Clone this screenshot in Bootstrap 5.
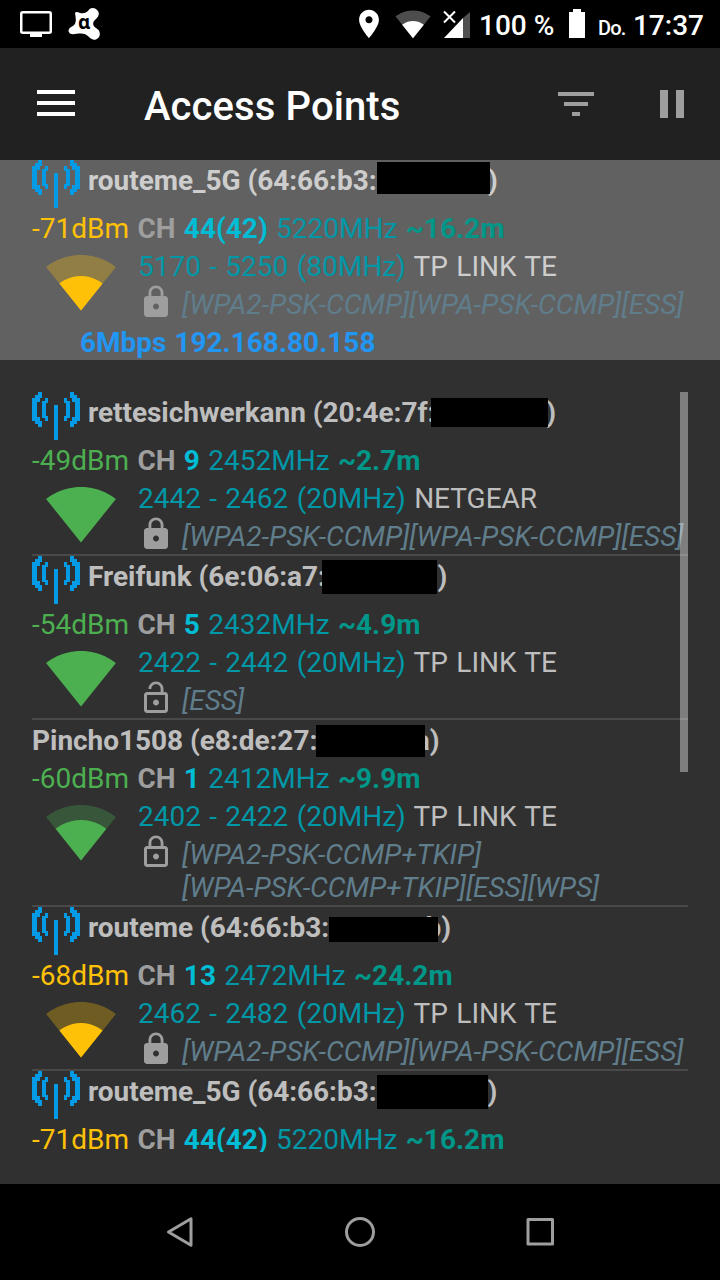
<!DOCTYPE html>
<html lang="de">
<head>
<meta charset="utf-8">
<meta name="viewport" content="width=device-width, initial-scale=1">
<title>Access Points</title>
<link rel="stylesheet" href="https://cdn.jsdelivr.net/npm/bootstrap@5.3.0/dist/css/bootstrap.min.css">
<style>
body{font-family:Roboto,sans-serif;font-size:28px;line-height:33px;background:#303030;color:rgba(255,255,255,.7);width:720px;height:1280px;overflow:hidden}
svg{display:block;flex:none}
.status{height:48px;background:#000;color:#fff;font-weight:500}
.appbar{height:112px;background:#212121;color:#fff}
.appbar h1{font-size:40px;font-weight:500;line-height:48px;margin:0;letter-spacing:.1px}
.muted{color:#9e9e9e}
.connected{background:#616161;height:200px}
.aplist{width:656px;height:760px;margin-top:32px;overflow:hidden;position:relative}
.scroll{position:absolute;top:0;right:0;width:8px;height:380px;background:rgba(255,255,255,.38)}
.ap+.ap{border-top:2px solid #494949}
.ln{padding:4px 0 1px;white-space:pre;word-spacing:1.4px}
.ttl{font-weight:700;letter-spacing:-.04px;word-spacing:0}
.ttl.ant{height:48px}
.ttl.ant .antenna{margin-right:8px}
.antenna{color:#039be5;margin-top:-4px}
.blk{background:#000;flex:none;position:relative;z-index:1}
.ch{color:#9e9e9e}.num{color:#00bcd4}.frq{color:#0097a7}.dst{color:#009688}
.good{color:#4caf50}.fair{color:#ffc107}
.sig{margin:0 21px 0 13px}
.caps{color:#607d8b;font-style:italic;padding:4px 0 0 8px;white-space:pre}
.caprow{min-height:38px}
.ip{color:#2196f3;padding-left:48px;word-spacing:1px}
.sysnav{height:96px;margin-top:32px;background:#000}
</style>
</head>
<body>
<svg width="0" height="0" class="position-absolute" aria-hidden="true">
<symbol id="ant" viewBox="0 0 48 48"><g id="half" fill="currentColor" shape-rendering="crispEdges"><path d="M6 0h4v6H8v4H5v15h3v4h2v6H6v-3H3v-3H0V6h3V3h3z"/><path d="M13 6h3v5h-2v13h2v5h-3v-3h-3V9h3z"/></g><use href="#half" transform="matrix(-1 0 0 1 48 0)"/><path fill="currentColor" d="M22 13h4v35h-4z"/></symbol>
<symbol id="w4" viewBox="0 0 24 24"><path fill="currentColor" d="M12.01 21.49L23.64 7c-.45-.34-4.93-4-11.64-4C5.28 3 .81 6.66.36 7l11.63 14.49.01.01z"/></symbol>
<symbol id="w3" viewBox="0 0 24 24"><use href="#w4" opacity=".3"/><path fill="currentColor" d="M3.53 10.95l8.46 10.54.01.01.01-.01 8.46-10.54C20.04 10.62 16.81 8 12 8c-4.81 0-8.04 2.62-8.47 2.95z"/></symbol>
<symbol id="w2" viewBox="0 0 24 24"><use href="#w4" opacity=".3"/><path fill="currentColor" d="M4.79 12.52l7.2 8.98H12l.01-.01 7.2-8.98C18.85 12.24 16.1 10 12 10s-6.85 2.24-7.21 2.52z"/></symbol>
<symbol id="lock" viewBox="0 0 24 24"><path fill="currentColor" d="M18 8h-1V6c0-2.76-2.24-5-5-5S7 3.24 7 6v2H6c-1.1 0-2 .9-2 2v10c0 1.1.9 2 2 2h12c1.1 0 2-.9 2-2V10c0-1.1-.9-2-2-2zm-6 9c-1.1 0-2-.9-2-2s.9-2 2-2 2 .9 2 2-.9 2-2 2zm3.1-9H8.9V6c0-1.71 1.39-3.1 3.1-3.1 1.71 0 3.1 1.39 3.1 3.1v2z"/></symbol>
<symbol id="locko" viewBox="0 0 24 24"><path fill="currentColor" d="M12 17c1.1 0 2-.9 2-2s-.9-2-2-2-2 .9-2 2 .9 2 2 2zm6-9h-1V6c0-2.76-2.24-5-5-5S7 3.24 7 6v2H6c-1.1 0-2 .9-2 2v10c0 1.1.9 2 2 2h12c1.1 0 2-.9 2-2V10c0-1.1-.9-2-2-2zM8.9 6c0-1.71 1.39-3.1 3.1-3.1s3.1 1.39 3.1 3.1v2H8.9V6zM18 20H6V10h12v10z"/></symbol>
<symbol id="open" viewBox="0 0 24 24"><path fill="currentColor" d="M12 17c1.1 0 2-.9 2-2s-.9-2-2-2-2 .9-2 2 .9 2 2 2zm6-9h-1V6c0-2.76-2.24-5-5-5S7 3.24 7 6h1.9c0-1.71 1.39-3.1 3.1-3.1 1.71 0 3.1 1.39 3.1 3.1v2H6c-1.1 0-2 .9-2 2v10c0 1.1.9 2 2 2h12c1.1 0 2-.9 2-2V10c0-1.1-.9-2-2-2zm0 12H6V10h12v10z"/></symbol>
</svg>

<header class="status d-flex align-items-start">
<svg width="32" height="48" style="margin-left:20px"><rect x="1.25" y="12.25" width="29.5" height="20.5" rx="1.5" fill="none" stroke="#fff" stroke-width="2.5"/><path fill="#fff" d="M10 33h12v4H10z"/></svg>
<svg width="34" height="48" style="margin-left:15px"><path fill="#fff" d="M8 13Q9 11 13 13 18 14 21 11C23 7 29 7 31.500 12 33 17 28 19 26.500 22 25 26 29 27.500 31.500 30 35 35 31 40 27 39.700 22 39 21 33.500 14 33.500 9 33.500 6 35 3 33.500 0 31 2 28 5 26.500 10 24 9 19 8 13z"/><text x="11" y="29" font-size="19" font-weight="700" fill="#000" font-family="'Noto Sans','DejaVu Sans',sans-serif">ɑ</text></svg>
<svg width="34" height="34" viewBox="0 0 24 24" style="margin:7px 0 0 251px"><path fill="#fff" d="M12 2C8.13 2 5 5.13 5 9c0 5.25 7 13 7 13s7-7.75 7-13c0-3.87-3.13-7-7-7zm0 9.5c-1.38 0-2.5-1.12-2.5-2.5s1.12-2.5 2.5-2.5 2.5 1.12 2.5 2.5-1.12 2.5-2.5 2.5z"/></svg>
<svg width="36" height="36" style="margin:5.5px 0 0 8.5px"><use href="#w2"/></svg>
<svg width="28" height="48" style="margin-left:12.5px"><path fill="#505050" d="M20 18l7-6v26h-7z"/><path fill="#fff" d="M20 18v20H1z"/><path stroke="#000" stroke-width="5" d="M1 11.500l11 11m0-11l-11 11"/><path stroke="#fff" stroke-width="2" d="M1 11.500l11 11m0-11l-11 11"/></svg>
<span style="margin:9px 0 0 8px">100 %</span>
<svg class="ms-auto" width="16" height="48"><path fill="#fff" d="M4 9h8v3h4v26H0V12h4z"/></svg>
<span style="margin:12px 0 0 12.500px;font-size:20px;letter-spacing:-.8px">Do.</span>
<span style="margin:9px 16px 0 7.500px">17:37</span>
</header>

<nav class="appbar d-flex align-items-center">
<svg width="38" height="26" style="margin-left:37px;margin-bottom:2px"><path fill="#fff" d="M0 0h38v4H0zm0 11h38v4H0zm0 11h38v4H0z"/></svg>
<h1 style="margin-left:69px;padding-top:5px">Access Points</h1>
<svg class="muted ms-auto" width="36" height="24"><path fill="currentColor" d="M0 0h36v4H0zm6 10h24v4H6zm8 10h8v4h-8z"/></svg>
<svg class="muted" width="24" height="28" style="margin:0 36px 0 66px"><path fill="currentColor" d="M0 0h8v28H0zm16 0h8v28h-8z"/></svg>
</nav>

<section class="connected"><div style="padding-left:32px">
<div class="ln ttl ant d-flex"><svg class="antenna" width="48" height="48"><use href="#ant"/></svg><span>routeme_5G (64:66:b3:</span><i class="blk" style="width:113px;height:32px;margin-top:-2px"></i><span style="margin-left:-1.5px">)</span></div>
<div class="ln"><span class="fair">-71dBm</span> <b class="ch">CH</b> <b class="num">44(42)</b> <span class="frq">5220MHz</span> <b class="dst">~16.2m</b></div>
<div class="d-flex"><svg class="fair sig" width="72" height="72"><use href="#w2"/></svg><div><div class="ln"><span class="frq">5170 - 5250 (80MHz)</span> TP LINK TE</div><div class="caprow d-flex"><svg class="muted" width="36" height="36"><use href="#lock"/></svg><div class="caps">[WPA2-PSK-CCMP][WPA-PSK-CCMP][ESS]</div></div></div></div>
<div class="ln ip fw-bold">6Mbps 192.168.80.158</div>
</div></section>

<main class="aplist mx-auto">
<article class="ap">
<div class="ln ttl ant d-flex"><svg class="antenna" width="48" height="48"><use href="#ant"/></svg><span>rettesichwerkann (20:4e:7f:</span><i class="blk" style="width:117px;height:29px;margin:2px 0 0 -4px"></i><span style="margin-left:-2px">)</span></div>
<div class="ln"><span class="good">-49dBm</span> <b class="ch">CH</b> <b class="num">9</b> <span class="frq">2452MHz</span> <b class="dst">~2.7m</b></div>
<div class="d-flex"><svg class="good sig" width="72" height="72"><use href="#w4"/></svg><div><div class="ln"><span class="frq">2442 - 2462 (20MHz)</span> NETGEAR</div><div class="caprow d-flex"><svg class="muted" width="36" height="36"><use href="#lock"/></svg><div class="caps">[WPA2-PSK-CCMP][WPA-PSK-CCMP][ESS]</div></div></div></div>
</article>
<article class="ap">
<div class="ln ttl ant d-flex"><svg class="antenna" width="48" height="48"><use href="#ant"/></svg><span>Freifunk (6e:06:a7:</span><i class="blk" style="width:115px;height:34px;margin:0 0 0 -3.5px"></i><span>)</span></div>
<div class="ln"><span class="good">-54dBm</span> <b class="ch">CH</b> <b class="num">5</b> <span class="frq">2432MHz</span> <b class="dst">~4.9m</b></div>
<div class="d-flex"><svg class="good sig" width="72" height="72"><use href="#w4"/></svg><div><div class="ln"><span class="frq">2422 - 2442 (20MHz)</span> TP LINK TE</div><div class="caprow d-flex"><svg class="muted" width="36" height="36"><use href="#open"/></svg><div class="caps">[ESS]</div></div></div></div>
</article>
<article class="ap">
<div class="ln ttl d-flex"><span>Pincho1508 (e8:de:27:</span><i class="blk" style="width:109px;height:32px;margin:1px 0 0 -1.5px"></i><span style="margin-left:-10px">a)</span></div>
<div class="ln"><span class="good">-60dBm</span> <b class="ch">CH</b> <b class="num">1</b> <span class="frq">2412MHz</span> <b class="dst">~9.9m</b></div>
<div class="d-flex"><svg class="good sig" width="72" height="72"><use href="#w3"/></svg><div><div class="ln"><span class="frq">2402 - 2422 (20MHz)</span> TP LINK TE</div><div class="caprow d-flex"><svg class="muted" width="36" height="36"><use href="#locko"/></svg><div class="caps" style="padding-bottom:1px;letter-spacing:-.07px">[WPA2-PSK-CCMP+TKIP]<br>[WPA-PSK-CCMP+TKIP][ESS][WPS]</div></div></div></div>
</article>
<article class="ap">
<div class="ln ttl ant d-flex"><svg class="antenna" width="48" height="48"><use href="#ant"/></svg><span>routeme (64:66:b3:</span><i class="blk" style="width:109px;height:25px;margin:6px 0 0 -.5px"></i><span style="margin-left:-12px">b)</span></div>
<div class="ln"><span class="fair">-68dBm</span> <b class="ch">CH</b> <b class="num">13</b> <span class="frq">2472MHz</span> <b class="dst">~24.2m</b></div>
<div class="d-flex"><svg class="fair sig" width="72" height="72"><use href="#w2"/></svg><div><div class="ln"><span class="frq">2462 - 2482 (20MHz)</span> TP LINK TE</div><div class="caprow d-flex"><svg class="muted" width="36" height="36"><use href="#lock"/></svg><div class="caps">[WPA2-PSK-CCMP][WPA-PSK-CCMP][ESS]</div></div></div></div>
</article>
<article class="ap">
<div class="ln ttl ant d-flex"><svg class="antenna" width="48" height="48"><use href="#ant"/></svg><span>routeme_5G (64:66:b3:</span><i class="blk" style="width:111px;height:34px"></i><span>)</span></div>
<div class="ln"><span class="fair">-71dBm</span> <b class="ch">CH</b> <b class="num">44(42)</b> <span class="frq">5220MHz</span> <b class="dst">~16.2m</b></div>
</article>
<div class="scroll"></div>
</main>

<footer class="sysnav d-flex justify-content-center align-items-center">
<svg width="400" height="40" fill="none" stroke="#9e9e9e" stroke-width="3" stroke-linejoin="round"><path d="M8.500 20L31 6.700v26.600z"/><circle cx="200" cy="20" r="13.500"/><rect x="368" y="7.500" width="24.500" height="24.500"/></svg>
</footer>
<script src="https://cdn.jsdelivr.net/npm/bootstrap@5.3.0/dist/js/bootstrap.bundle.min.js"></script>
</body>
</html>
